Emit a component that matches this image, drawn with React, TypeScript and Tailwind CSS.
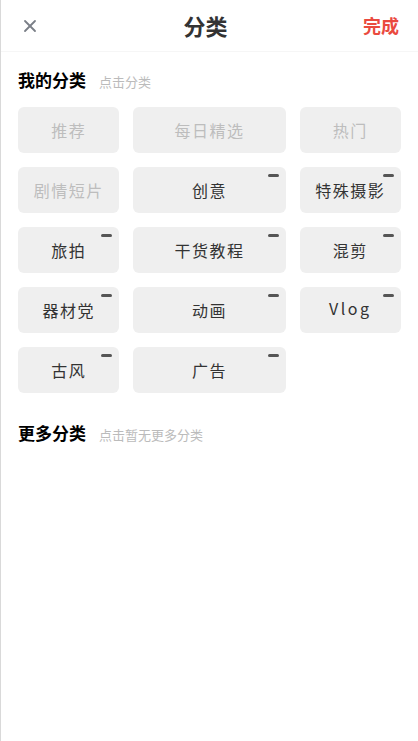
import { X } from "lucide-react";

type Tag = { name: string; fixed?: boolean };

const MY_TAGS: Tag[] = [
  { name: "推荐", fixed: true },
  { name: "每日精选", fixed: true },
  { name: "热门", fixed: true },
  { name: "剧情短片", fixed: true },
  { name: "创意" },
  { name: "特殊摄影" },
  { name: "旅拍" },
  { name: "干货教程" },
  { name: "混剪" },
  { name: "器材党" },
  { name: "动画" },
  { name: "Vlog" },
  { name: "古风" },
  { name: "广告" },
];

function TagItem({ tag }: { tag: Tag }) {
  const latin = /^[A-Za-z]+$/.test(tag.name);
  return (
    <div className="relative h-[46px] rounded-md bg-[#efefef] flex items-center justify-center">
      <span
        className={
          tag.fixed
            ? "text-[16px] text-[#bdbdbd] tracking-[1.5px]"
            : latin
              ? "text-[16px] text-[#333] tracking-[2.5px] -mt-[4px]"
              : "text-[16px] text-[#333] tracking-[1.5px]"
        }
      >
        {tag.name}
      </span>
      {!tag.fixed && (
        <span className="absolute top-[7px] right-[7px] w-[11px] h-[3px] rounded-sm bg-[#555]" />
      )}
    </div>
  );
}

function SectionTitle({ title, hint }: { title: string; hint: string }) {
  return (
    <div className="flex items-baseline gap-[13px] px-[17px]">
      <h3 className="text-[17px] font-bold text-black">{title}</h3>
      <span className="text-[13px] text-[#bbb]">{hint}</span>
    </div>
  );
}

export default function App() {
  return (
    <div
      className="min-h-[741px] bg-white border-l border-[#d9d9d9]"
      style={{ fontFamily: '"Noto Sans CJK SC", "Noto Sans", sans-serif' }}
    >
      {/* Header */}
      <div className="h-[52px] flex items-center justify-between pl-[19px] pr-[19px] border-b border-[#f6f6f6]">
        <X className="w-[20px] h-[20px] text-[#7a7f87]" strokeWidth={2.2} />
        <h1 className="text-[22px] font-bold text-[#333] pl-[8px]">分类</h1>
        <button className="text-[18px] font-bold text-[#ea4a3f]">完成</button>
      </div>

      {/* My categories */}
      <div className="pt-[15px]">
        <SectionTitle title="我的分类" hint="点击分类" />
        <div className="grid grid-cols-[2fr_3fr_2fr] gap-[14px] px-[17px] pt-[14px]">
          {MY_TAGS.map((t) => (
            <TagItem key={t.name} tag={t} />
          ))}
        </div>
      </div>

      {/* More categories */}
      <div className="pt-[27px]">
        <SectionTitle title="更多分类" hint="点击暂无更多分类" />
      </div>
    </div>
  );
}
